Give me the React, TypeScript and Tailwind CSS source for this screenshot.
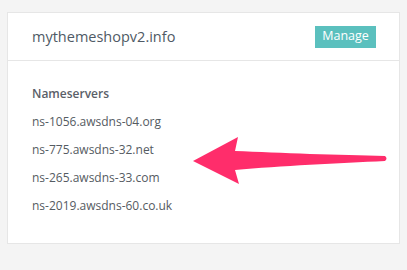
import React from 'react';

const nameservers = [
  'ns-1056.awsdns-04.org',
  'ns-775.awsdns-32.net',
  'ns-265.awsdns-33.com',
  'ns-2019.awsdns-60.co.uk',
];

export default function App() {
  return (
    <div className="w-[407px] h-[270px] bg-[#f4f4f4] pt-3 pl-[7px] pr-[7px] font-['Open_Sans',sans-serif] relative">
      <div className="bg-white border border-[#e6e6e6] w-[393px] h-[232px]">
        <div className="flex items-center justify-between h-12 pl-6 pr-[23px] border-b border-[#e6e6e6]">
          <span className="text-[14.5px] text-[#4f5a65]">mythemeshopv2.info</span>
          <button type="button" className="bg-[#5bc0be] text-white text-[12.5px] h-[22px] w-[61px] leading-none">
            Manage
          </button>
        </div>
        <div className="pl-6 pt-[23px]">
          <p className="text-[12px] font-semibold text-[#5a6068] leading-[20px]">Nameservers</p>
          <ul className="mt-1">
            {nameservers.map((ns) => (
              <li key={ns} className="text-[12px] text-[#555b62] leading-[28px]">
                {ns}
              </li>
            ))}
          </ul>
        </div>
      </div>
      <svg className="absolute left-0 top-0" width="407" height="270" viewBox="0 0 407 270">
        <path
          d="M193 161 L238 137 L235 151 C280 153 340 155 385 156 Q388 158.5 385 161 C340 163 280 166 235 170 L239 184 Z"
          fill="#ff2d6b"
        />
      </svg>
    </div>
  );
}
